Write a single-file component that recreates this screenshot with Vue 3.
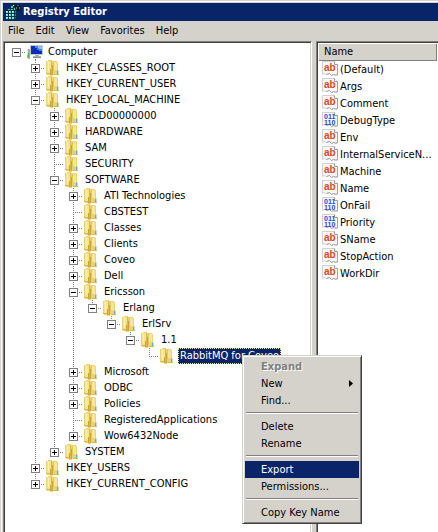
<script setup>
import { ref, computed } from 'vue'

const menus = ['File', 'Edit', 'View', 'Favorites', 'Help']

const leaf = (name) => ({ name })
const closed = (name) => ({ name, state: 'closed' })
const open = (name, children) => ({ name, state: 'open', children })

const root = open('Computer', [
  closed('HKEY_CLASSES_ROOT'),
  closed('HKEY_CURRENT_USER'),
  open('HKEY_LOCAL_MACHINE', [
    closed('BCD00000000'),
    closed('HARDWARE'),
    closed('SAM'),
    leaf('SECURITY'),
    open('SOFTWARE', [
      closed('ATI Technologies'),
      leaf('CBSTEST'),
      closed('Classes'),
      closed('Clients'),
      closed('Coveo'),
      closed('Dell'),
      open('Ericsson', [
        open('Erlang', [open('ErlSrv', [open('1.1', [leaf('RabbitMQ for Coveo')])])])
      ]),
      closed('Microsoft'),
      closed('ODBC'),
      closed('Policies'),
      leaf('RegisteredApplications'),
      closed('Wow6432Node')
    ]),
    closed('SYSTEM')
  ]),
  closed('HKEY_USERS'),
  closed('HKEY_CURRENT_CONFIG')
])

// Flattens the tree; guides holds one flag per ancestor column: does its line continue?
function flatten(node, depth, guides, last) {
  const row = { name: node.name, state: node.state, depth, guides, last }
  const next = depth === 0 ? [false] : [...guides, !last]
  const kids = node.children || []
  return [row, ...kids.flatMap((k, i) => flatten(k, depth + 1, next, i === kids.length - 1))]
}
const rows = computed(() => flatten(root, 0, [], true))
const selected = ref('RabbitMQ for Coveo')

const values = [
  ['(Default)', 'text'],
  ['Args', 'text'],
  ['Comment', 'text'],
  ['DebugType', 'binary'],
  ['Env', 'text'],
  ['InternalServiceN...', 'text'],
  ['Machine', 'text'],
  ['Name', 'text'],
  ['OnFail', 'binary'],
  ['Priority', 'binary'],
  ['SName', 'text'],
  ['StopAction', 'text'],
  ['WorkDir', 'text']
]

const actions = [
  [{ name: 'Expand', disabled: true }, { name: 'New', sub: true }, { name: 'Find...' }],
  [{ name: 'Delete' }, { name: 'Rename' }],
  [{ name: 'Export', active: true }, { name: 'Permissions...' }],
  [{ name: 'Copy Key Name' }]
]
</script>

<template>
  <div class="window">
    <header class="titlebar">
      <svg class="icon" viewBox="0 0 16 16" shape-rendering="crispEdges" aria-hidden="true">
        <path d="M0 6h2v-1h2v-1h2v-3h2v-1h2v2h2v2h-1v1h2v9h-1v1h-1v1h-11z" fill="#00343c" />
        <path d="M10 2l3-2 3 2v3l-3 2-3-2z" fill="#001418" />
        <path d="M1 7h2v2h-2zM4 7h2v2h-2zM7 7h2v2h-2zM1 10h2v2h-2zM4 10h2v2h-2zM7 10h2v2h-2zM1 13h2v2h-2zM4 13h2v2h-2zM7 13h2v2h-2z" fill="#5ce8e8" />
        <path d="M3 5h2v1h-2zM6 5h2v1h-2zM6 2h2v2h-2zM9 4h1v2h-1z" fill="#35c4c8" />
        <path d="M1 7h1v1h-1zM4 7h1v1h-1zM7 7h1v1h-1zM1 10h1v1h-1zM4 10h1v1h-1zM7 10h1v1h-1zM1 13h1v1h-1zM4 13h1v1h-1zM8 1h1v1h-1z" fill="#d8ffff" />
        <path d="M10 7h1v2h-1zM10 10h1v2h-1zM10 13h1v1h-1zM12 1h2v1h-2zM11 3h1v2h-1zM14 3h1v2h-1z" fill="#109098" />
      </svg>
      <h1>Registry Editor</h1>
    </header>
    <nav class="menubar">
      <button v-for="m in menus" :key="m" type="button">{{ m }}</button>
    </nav>
    <main class="panes">
      <section class="pane">
        <ul class="tree" role="tree">
          <li
            v-for="row in rows"
            :key="row.name"
            class="row"
            role="treeitem"
            :aria-level="row.depth + 1"
            :aria-selected="row.name === selected"
          >
            <span v-for="(g, i) in row.guides" :key="i" class="cell" :class="{ line: g }"></span>
            <span class="cell branch" :class="{ line: row.depth > 0, last: row.last }">
              <button
                v-if="row.state"
                type="button"
                class="toggle"
                :class="row.state"
                :aria-label="'Toggle ' + row.name"
              ></button>
            </span>
            <svg v-if="row.depth === 0" class="icon computer" viewBox="0 0 17 16" shape-rendering="crispEdges" aria-hidden="true">
              <path d="M1 5h3v10h-2l-1-1z" fill="#a4acac" />
              <path d="M1 5h1v6h-1z" fill="#dfe3e3" />
              <path d="M2 9h1v4h-1z" fill="#35c035" />
              <path d="M4 1h13v10h-13z" fill="#c3c9d0" />
              <path d="M5 2h11v8h-11z" fill="#0c2fb8" />
              <path d="M9 2h7v5h-3v-1h-2v-2h-2z" fill="#4c7df0" />
              <path d="M12 2h4v3h-3v-1h-1z" fill="#93b8ff" />
              <path d="M9 11h4v1h2v2h-8v-2h2z" fill="#a9b0b6" />
              <path d="M7 13h8v1h-8z" fill="#868e94" />
              <path d="M9 15h1v1h-1z" fill="#808080" />
            </svg>
            <svg v-else class="icon" viewBox="0 0 16 16" shape-rendering="crispEdges" aria-hidden="true">
              <path d="M1 1h2v-1h4v1h5v1h1v9h1v4h-6v1h-3v-1h-3v-1h-1z" fill="#ecd272" />
              <path d="M2 1h4v12h-4z" fill="#f5e38e" />
              <path d="M3 2h1v9h-1z" fill="#fbf2b8" />
              <path d="M6 1h1v14h-1z" fill="#d9b84c" />
              <path d="M7 5h1v10h-1zM5 9h1v6h-1z" fill="#cba53a" />
              <path d="M9 2h3v8h-3z" fill="#f6e699" />
              <path d="M8 2h1v9h-1z" fill="#e2c65e" />
              <path d="M1 13h4v1h-4zM9 14h5v1h-5z" fill="#d8b850" />
              <path d="M12 11h1v3h-1z" fill="#48b4e4" />
              <path d="M13 10h1v4h-1z" fill="#c8dfe0" />
            </svg>
            <span class="label" :class="{ selected: row.name === selected }">{{ row.name }}</span>
          </li>
        </ul>
      </section>
      <section class="pane">
        <table class="values">
          <thead>
            <tr><th scope="col">Name</th></tr>
          </thead>
          <tbody>
            <tr v-for="[name, kind] in values" :key="name">
              <td>
                <span class="value">
                  <svg class="icon" viewBox="0 0 16 16" aria-hidden="true">
                    <path d="M.5.5h12l3 3v10l-2 1-2-1-2 1-2-2-3 1-2-1-2 1z" fill="#f8f8fa" stroke="#d0d0d4" />
                    <path d="M12.500.5v3h3" fill="#fff" stroke="#9a9a9e" />
                    <path d="M15.500 3.500v10.500h-2l-2-.5-2 1-2-2-3 1" fill="none" stroke="#a2a2a6" />
                    <text v-if="kind === 'text'" class="letters" x="2" y="10">ab</text>
                    <g v-else class="bits">
                      <text x="2" y="7">011</text>
                      <text x="2" y="13">110</text>
                    </g>
                  </svg>
                  <span>{{ name }}</span>
                </span>
              </td>
            </tr>
          </tbody>
        </table>
      </section>
    </main>
    <div class="context" role="menu">
      <div v-for="(group, i) in actions" :key="i" class="group">
        <button
          v-for="a in group"
          :key="a.name"
          type="button"
          role="menuitem"
          :disabled="a.disabled"
          :class="{ active: a.active }"
        >
          <span>{{ a.name }}</span>
          <svg v-if="a.sub" class="arrow" viewBox="0 0 4 7" aria-hidden="true">
            <path d="M0 0l4 3.500-4 3.500z" />
          </svg>
        </button>
      </div>
    </div>
  </div>
</template>

<style>
body {
  background: #d5d2cb;
}
</style>

<style scoped>
.window {
  position: relative;
  display: flex;
  flex-direction: column;
  box-sizing: border-box;
  min-height: 100vh;
  padding: 2px 0 0 2px;
  border: solid #d5d2cb;
  border-width: 1px 0 0 1px;
  box-shadow: inset 1px 1px #fff;
  background: #d5d2cb;
  color: #000;
  font: 11px/16px 'DejaVu Sans Condensed', Tahoma, 'DejaVu Sans', sans-serif;
  overflow: hidden;
}
button {
  font: inherit;
  color: inherit;
  background: none;
  border: 0;
  padding: 0;
  margin: 0;
}
.icon {
  width: 16px;
  height: 16px;
  flex: none;
}
.computer {
  width: 17px;
}
.titlebar {
  display: flex;
  align-items: center;
  gap: 2px;
  height: 18px;
  padding-left: 2px;
  background: #0a246a;
  color: #fff;
}
.titlebar h1 {
  margin: 0;
  font-size: 11px;
  font-weight: bold;
}
.menubar {
  display: flex;
  gap: 11px;
  height: 20px;
  padding-left: 5px;
}
.panes {
  flex: 1;
  display: grid;
  grid-template-columns: 309px 1fr;
  gap: 4px;
}
.pane {
  min-width: 0;
  background: #fff;
  border: solid #808080;
  border-width: 1px 0 0 1px;
  box-shadow: inset 1px 1px #404040;
  padding: 2px 0 0 1px;
}
.pane:first-child {
  border-right: 1px solid #fff;
  box-shadow: inset 1px 1px #404040, inset -1px 0 #d5d2cb;
}
.tree {
  list-style: none;
  margin: 0;
  padding: 0 0 0 2px;
}
.row {
  display: flex;
  height: 16px;
}
.cell {
  position: relative;
  width: 19px;
  height: 16px;
  flex: none;
  background-repeat: no-repeat;
}
.line {
  background-image: repeating-linear-gradient(#808080 0 1px, #fff 1px 2px);
  background-size: 1px 100%;
  background-position: 9px 0;
}
.line.last {
  background-size: 1px 9px;
}
.branch {
  display: flex;
  align-items: center;
  justify-content: center;
}
.branch::after {
  content: '';
  position: absolute;
  left: 10px;
  right: 0;
  top: 8px;
  height: 1px;
  background: repeating-linear-gradient(90deg, #fff 0 1px, #808080 1px 2px);
}
.toggle {
  z-index: 1;
  width: 9px;
  height: 9px;
  border: 1px solid #808080;
  background: linear-gradient(#000, #000) center / 5px 1px no-repeat, #fff;
}
.toggle.closed {
  background: linear-gradient(#000, #000) center / 5px 1px no-repeat,
    linear-gradient(#000, #000) center / 1px 5px no-repeat, #fff;
}
.label {
  margin-left: 3px;
  padding: 0 2px;
  white-space: nowrap;
}
.selected {
  background: #0a246a;
  color: #fff;
  outline: 1px dotted #f5db95;
  outline-offset: -1px;
}
.values {
  width: 100%;
  border-collapse: collapse;
}
.values th {
  display: block;
  box-sizing: border-box;
  height: 17px;
  margin: 0 1px;
  padding: 0 5px;
  border: solid #808080;
  border-width: 0 1px 1px 0;
  background: #d5d2cb;
  font-weight: normal;
  text-align: left;
}
.values td {
  padding: 0;
}
.value {
  display: flex;
  gap: 2px;
  height: 17px;
  padding-left: 4px;
  line-height: 17px;
  white-space: nowrap;
}
.letters {
  font: bold 10px 'Liberation Sans', Arial, sans-serif;
  fill: #dc4a20;
}
.bits {
  font: bold 7px 'Liberation Sans', Arial, sans-serif;
  fill: #2448d8;
}
.context {
  position: absolute;
  left: 241px;
  top: 354px;
  width: 114px;
  padding: 2px;
  background: #d5d2cb;
  border: 1px solid;
  border-color: #d5d2cb #404040 #404040 #d5d2cb;
  box-shadow: inset 1px 1px #fff, inset -1px -1px #808080;
}
.group + .group::before {
  content: '';
  display: block;
  height: 1px;
  margin: 3px 1px 4px;
  background: #808080;
  border-bottom: 1px solid #fff;
}
.context button {
  display: flex;
  align-items: center;
  justify-content: space-between;
  width: 100%;
  height: 17px;
  padding: 0 6px 0 16px;
}
.context button:disabled {
  color: #808080;
  font-weight: bold;
  text-shadow: 1px 1px #fff;
}
.context .active {
  background: #0a246a;
  color: #fff;
}
.arrow {
  width: 4px;
  height: 7px;
}
</style>
